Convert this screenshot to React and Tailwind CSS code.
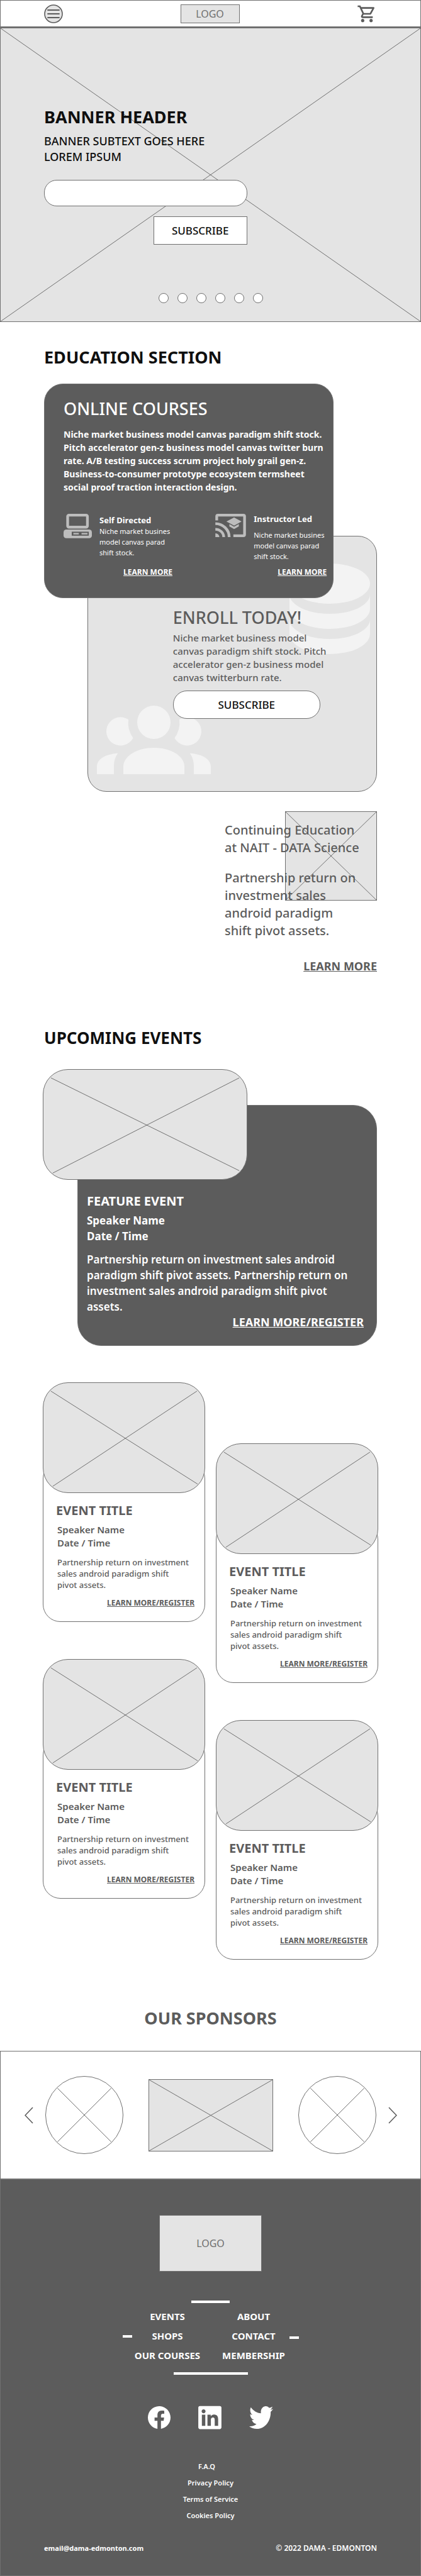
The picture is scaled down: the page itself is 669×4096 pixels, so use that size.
import React from "react";
import { MdOutlineShoppingCart } from "react-icons/md";
import { BsFacebook } from "react-icons/bs";
import { FaLinkedin, FaTwitter } from "react-icons/fa";

const EDGE = [["0%", "0%", "100%", "100%"], ["100%", "0%", "0%", "100%"]];
const WIDE = [["3.7%", "7.4%", "96.3%", "92.2%"], ["96.3%", "7.4%", "4.6%", "94.4%"]];
const CARD = [["4.6%", "7.4%", "95.7%", "92.4%"], ["95.3%", "7.4%", "5.8%", "94.4%"]];
const ROUND = [["15%", "15%", "85%", "85%"], ["85%", "15%", "15%", "85%"]];

function Cross({ lines = EDGE }) {
  return (
    <svg className="absolute inset-0 h-full w-full" stroke="#707070" strokeWidth="1" aria-hidden="true">
      {lines.map(([x1, y1, x2, y2], i) => (
        <line key={i} x1={x1} y1={y1} x2={x2} y2={y2} />
      ))}
    </svg>
  );
}

function ComputerIcon() {
  return (
    <svg className="h-[39px] w-[45px] shrink-0" viewBox="54 54 156 134" fill="#bdbdbd" aria-hidden="true">
      <rect x="76.5" y="61" width="109" height="66" rx="7" fill="none" stroke="#bdbdbd" strokeWidth="15" />
      <rect x="54" y="140" width="156" height="48" rx="15" />
      <rect x="99" y="152" width="94" height="22" fill="#5c5c5c" />
      <rect x="108" y="159" width="30" height="8" />
      <rect x="153" y="159" width="33" height="8" />
    </svg>
  );
}

function CastIcon() {
  return (
    <svg className="h-[37px] w-[49px] shrink-0" viewBox="42 54 168 128" fill="#bdbdbd" aria-hidden="true">
      <g fill="none" stroke="#bdbdbd" strokeWidth="15">
        <path d="M49.5 90V68q0-6.500 6.500-6.500H196q6.500 0 6.500 6.500V168q0 6.500-6.500 6.500H141" />
        <path d="M42 108a76 74 0 0 1 76 74" />
        <path d="M42 139a46 43 0 0 1 46 43" />
      </g>
      <path d="M42 161a22 21 0 0 1 22 21H42z" />
      <path d="M145 74l41 22-41 23-42-23z" />
      <path d="M119 110l26 15 26-15v13l-26 15-26-15z" />
    </svg>
  );
}

function Course({ icon, title, titleGap }) {
  return (
    <div className="flex flex-col items-end justify-between gap-2">
      <div className="flex gap-3">
        {icon}
        <div className="w-[116px] leading-[17px]">
          <h4 className={titleGap ? "mb-2 text-[13px] font-bold" : "pt-0.5 text-[13px] font-bold"}>{title}</h4>
          <p className="text-[11px]">Niche market busines model canvas parad shift stock.</p>
        </div>
      </div>
      <a href="#courses" className="text-xs leading-[18px] font-bold underline">LEARN MORE</a>
    </div>
  );
}

function EventCard() {
  return (
    <article className="text-[#5c5c5c]">
      <div className="relative z-10 h-[176px] overflow-hidden rounded-[40px] border border-[#707070] bg-[#e4e4e4]">
        <Cross lines={CARD} />
      </div>
      <div className="mt-[-51px] flex flex-col rounded-[28px] border border-[#707070] pt-16 pr-4 pb-5 pl-5">
        <h3 className="text-xl leading-7 font-bold">EVENT TITLE</h3>
        <div className="flex flex-col pl-0.5">
          <p className="mt-1.5 text-[15px] leading-[21px] font-semibold">Speaker Name<br />Date / Time</p>
          <p className="mt-[11px] max-w-[211px] text-[13px] leading-[18px] font-medium">
            Partnership return on investment sales android paradigm shift pivot assets.
          </p>
          <a href="#register" className="mt-[11px] self-end text-xs leading-[18px] font-bold underline">LEARN MORE/REGISTER</a>
        </div>
      </div>
    </article>
  );
}

export default function App() {
  return (
    <div className="min-h-screen bg-white font-['Noto_Sans',sans-serif] text-[#0f0f0f]">
      <header className="flex h-11 items-center justify-between border border-b-2 border-[#707070] px-[69px]">
        <button type="button" aria-label="Menu">
          <svg className="block h-[30px] w-[30px]" viewBox="0 0 30 30" aria-hidden="true">
            <circle cx="15" cy="15" r="14" fill="#e4e4e4" stroke="#5c5c5c" strokeWidth="1.6" />
            <path d="M6 9h18M6 15h18M6 21h18" stroke="#5c5c5c" strokeWidth="1.8" strokeLinecap="round" />
          </svg>
        </button>
        <div className="flex h-[30px] w-[94px] items-center justify-center border border-[#707070] bg-[#e4e4e4] text-base text-[#707070]">LOGO</div>
        <button type="button" aria-label="Cart">
          <MdOutlineShoppingCart className="block h-8 w-8 text-[#5c5c5c]" />
        </button>
      </header>

      <section className="relative border border-[#707070] bg-[#e4e4e4] px-[69px] pt-[123px] pb-[29px]">
        <Cross />
        <div className="relative">
          <h1 className="text-[27px] leading-9 font-bold">BANNER HEADER</h1>
          <p className="mt-2 text-lg leading-[25px] font-medium">BANNER SUBTEXT GOES HERE<br />LOREM IPSUM</p>
          <form className="mt-6 flex w-[61%] flex-col items-end gap-4">
            <input type="email" aria-label="Email" className="h-[42px] w-full rounded-[20px] border border-[#707070] bg-white px-5" />
            <button type="button" className="h-[45px] w-[149px] border border-[#707070] bg-white text-[17px] font-medium">SUBSCRIBE</button>
          </form>
          <div className="mt-[77px] flex justify-center gap-3.5">
            {[1, 2, 3, 4, 5, 6].map((n) => (
              <button key={n} type="button" aria-label={`Slide ${n}`} className="h-4 w-4 rounded-full border border-[#707070] bg-white" />
            ))}
          </div>
        </div>
      </section>

      <section className="px-[70px] pt-[38px]">
        <h2 className="text-[27px] leading-9 font-bold">EDUCATION SECTION</h2>
        <div className="relative z-10 mt-6 w-[87%] rounded-[30px] border border-[#707070] bg-[#5c5c5c] pt-[21px] pr-2.5 pb-[31px] pl-[30px] text-white">
          <h3 className="text-[27px] leading-9 font-medium">ONLINE COURSES</h3>
          <p className="mt-3 text-sm leading-[21px] font-bold">
            Niche market business model canvas paradigm shift stock. Pitch accelerator gen-z business model canvas twitter burn rate. A/B testing success scrum project holy grail gen-z. Business-to-consumer prototype ecosystem termsheet social proof traction interaction design.
          </p>
          <div className="mt-8 flex justify-between">
            <Course icon={<ComputerIcon />} title="Self Directed" />
            <Course icon={<CastIcon />} title="Instructor Led" titleGap />
          </div>
        </div>

        <div className="relative mt-[-99px] ml-auto w-[87%] rounded-[30px] border border-[#707070] bg-[#e4e4e4] pt-[111px] pb-[115px] pl-[135px] text-[#5c5c5c]">
          <svg className="absolute top-[43px] right-[10px] h-36 w-32" viewBox="0 0 128 144" fill="#f3f3f3" aria-hidden="true">
            <ellipse cx="64" cy="32" rx="64" ry="32" />
            <path d="M0 49a64 31 0 0 0 128 0v23a64 32 0 0 1-128 0z" />
            <path d="M0 89a64 31 0 0 0 128 0v23a64 32 0 0 1-128 0z" />
          </svg>
          <svg className="absolute bottom-[27px] left-[14px] h-[109px] w-[181px]" viewBox="0 0 181 109" fill="#f3f3f3" aria-hidden="true">
            <circle cx="90.500" cy="26.500" r="26.500" />
            <path d="M42 109V97C42 80 64 67 90.500 67S139 80 139 97V109z" />
            <g id="side">
              <path d="M50 22A41 41 0 0 0 57.600 51.400A22.600 22.600 0 1 1 50 22z" />
              <path d="M0 109V97C0 85 14 77 33.300 75.800C29 82 27 88 27 97V109z" />
            </g>
            <use href="#side" transform="translate(181 0) scale(-1 1)" />
          </svg>
          <div className="relative">
            <h3 className="text-[27px] leading-9 font-medium">ENROLL TODAY!</h3>
            <p className="mt-1 max-w-[252px] text-[15px] leading-[21px] font-medium">
              Niche market business model canvas paradigm shift stock. Pitch accelerator gen-z business model canvas twitterburn rate.
            </p>
            <button type="button" className="mt-2.5 block h-[45px] w-[234px] rounded-[22px] border border-[#707070] bg-white text-[17px] font-medium text-[#0f0f0f]">SUBSCRIBE</button>
          </div>
        </div>

        <div className="relative mt-[31px] ml-auto w-[242px] pt-4 text-xl leading-7 font-medium text-[#5c5c5c]">
          <div className="absolute top-0 right-0 h-[142px] w-[146px] border border-[#707070] bg-[#e4e4e4]">
            <Cross />
          </div>
          <div className="relative flex flex-col">
            <h3>Continuing Education<br />at NAIT - DATA Science</h3>
            <p className="mt-5 max-w-[210px]">Partnership return on investment sales android paradigm shift pivot assets.</p>
            <a href="#nait" className="mt-7 self-end text-lg leading-7 font-bold underline">LEARN MORE</a>
          </div>
        </div>
      </section>

      <section className="px-[68px] pt-[82px]">
        <h2 className="px-0.5 text-[26px] leading-9 font-bold">UPCOMING EVENTS</h2>
        <div className="relative z-10 mt-8 h-[176px] w-[61%] overflow-hidden rounded-[40px] border border-[#707070] bg-[#e4e4e4]">
          <Cross lines={WIDE} />
        </div>
        <article className="mt-[-119px] mr-0.5 ml-[55px] flex flex-col rounded-[38px] border border-[#707070] bg-[#5c5c5c] pt-[138px] pr-5 pb-6 pl-3.5 text-white">
          <h3 className="text-xl leading-7 font-bold">FEATURE EVENT</h3>
          <p className="mt-1 text-[17px] leading-[25px] font-bold">Speaker Name<br />Date / Time</p>
          <p className="mt-3 max-w-[430px] text-[17px] leading-[25px] font-semibold">
            Partnership return on investment sales android paradigm shift pivot assets. Partnership return on investment sales android paradigm shift pivot assets.
          </p>
          <a href="#register" className="self-end text-lg leading-[25px] font-bold underline">LEARN MORE/REGISTER</a>
        </article>

        <div className="mt-[58px] grid grid-cols-2 gap-x-[17px]">
          <div className="flex flex-col gap-[59px]">
            <EventCard />
            <EventCard />
          </div>
          <div className="flex flex-col gap-[59px] pt-[97px]">
            <EventCard />
            <EventCard />
          </div>
        </div>
      </section>

      <section className="pt-[75px]">
        <h2 className="text-center text-[27px] leading-9 font-bold text-[#5c5c5c]">OUR SPONSORS</h2>
        <div className="mt-[34px] flex h-[204px] items-center justify-center gap-[19px] border border-[#707070]">
          <button type="button" aria-label="Previous sponsors">
            <svg className="block h-[27px] w-[14px]" viewBox="0 0 14 27" fill="none" stroke="#5c5c5c" strokeWidth="1.6" aria-hidden="true"><path d="M13 1L1 13.500L13 26" /></svg>
          </button>
          <div className="flex items-center gap-10">
            <div className="relative h-[124px] w-[124px] rounded-full border border-[#707070]"><Cross lines={ROUND} /></div>
            <div className="relative h-[115px] w-[198px] border border-[#707070] bg-[#e4e4e4]"><Cross /></div>
            <div className="relative h-[124px] w-[124px] rounded-full border border-[#707070]"><Cross lines={ROUND} /></div>
          </div>
          <button type="button" aria-label="Next sponsors">
            <svg className="block h-[27px] w-[14px]" viewBox="0 0 14 27" fill="none" stroke="#5c5c5c" strokeWidth="1.6" aria-hidden="true"><path d="M1 1L13 13.500L1 26" /></svg>
          </button>
        </div>
      </section>

      <footer className="flex flex-col items-center border border-[#707070] bg-[#5c5c5c] px-[69px] pt-14 pb-[34px] text-white">
        <div className="flex h-[90px] w-[163px] items-center justify-center border border-[#707070] bg-[#e4e4e4] text-base text-[#707070]">LOGO</div>
        <div className="mt-[46px] h-1 w-[61px] bg-white" />
        <nav className="relative mt-1.5 grid w-[274px] grid-cols-2 text-center text-[15px] leading-[31px] font-bold">
          <a href="#events">EVENTS</a>
          <a href="#about">ABOUT</a>
          <a href="#shops">SHOPS</a>
          <a href="#contact">CONTACT</a>
          <a href="#courses">OUR COURSES</a>
          <a href="#membership">MEMBERSHIP</a>
          <span className="absolute top-[45px] left-[-3px] h-1 w-[15px] bg-white" />
          <span className="absolute top-[47px] right-[-3px] h-1 w-[15px] bg-white" />
        </nav>
        <div className="mt-[11px] h-1 w-[118px] bg-white" />
        <div className="mt-12 flex h-[39px] items-center gap-11">
          <a href="#facebook" aria-label="Facebook"><BsFacebook className="block h-9 w-9" /></a>
          <a href="#linkedin" aria-label="LinkedIn"><FaLinkedin className="block h-[42px] w-[37px]" /></a>
          <a href="#twitter" aria-label="Twitter"><FaTwitter className="block h-9 w-[38px]" viewBox="0 48 512 416" preserveAspectRatio="none" /></a>
        </div>
        <div className="mt-[46px] flex flex-col items-center text-[11px] leading-[26px] font-semibold">
          <a href="#faq" className="pr-3">F.A.Q</a>
          <a href="#privacy">Privacy Policy</a>
          <a href="#terms">Terms of Service</a>
          <a href="#cookies">Cookies Policy</a>
        </div>
        <div className="mt-[30px] flex w-full items-center justify-between leading-[18px]">
          <a href="mailto:email@dama-edmonton.com" className="text-[11px] font-bold">email@dama-edmonton.com</a>
          <span className="text-xs font-semibold">© 2022 DAMA - EDMONTON</span>
        </div>
      </footer>
    </div>
  );
}
